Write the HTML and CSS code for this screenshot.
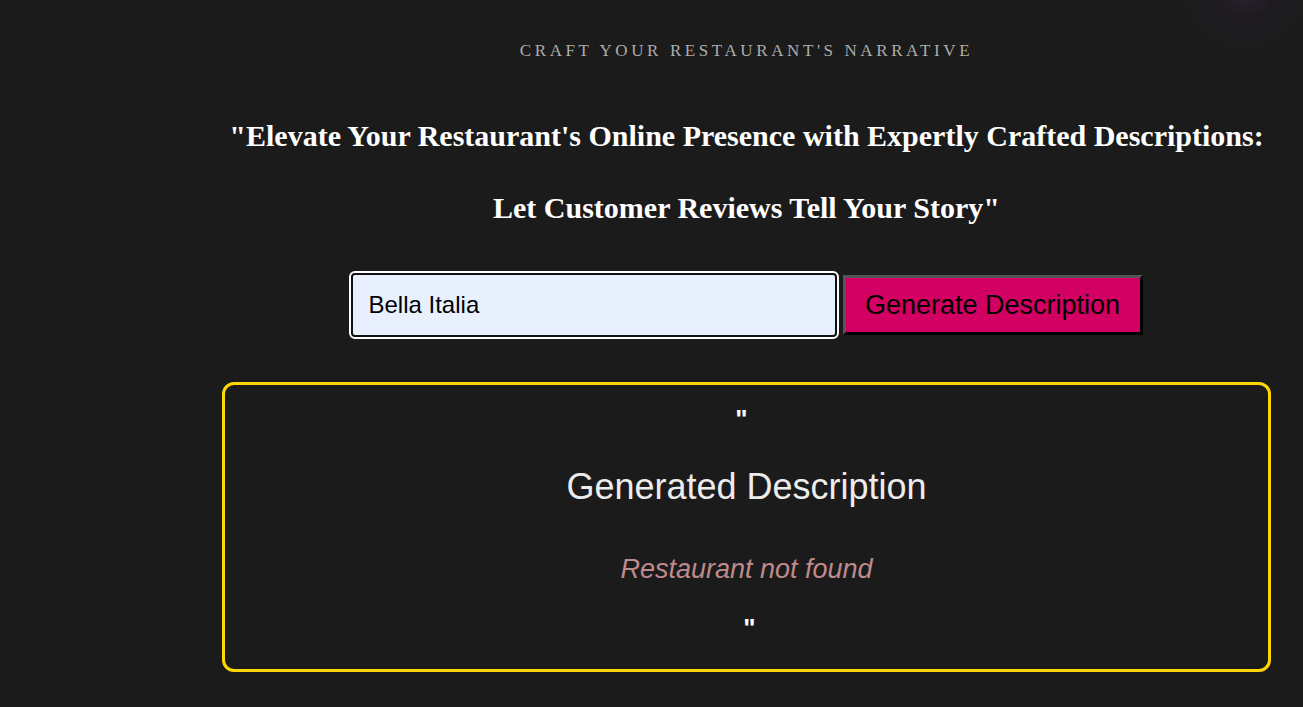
FILE: index.html
```html
<!DOCTYPE html>
<html lang="en">
<head>
<meta charset="utf-8">
<title>Craft Your Restaurant's Narrative</title>
<link rel="stylesheet" href="styles.css">
</head>
<body>
<div class="page">
  <main class="main">
    <p class="eyebrow">Craft Your Restaurant's Narrative</p>
    <h1 class="headline">
      <span class="line">"Elevate Your Restaurant's Online Presence with Expertly Crafted Descriptions:</span>
      <span class="line">Let Customer Reviews Tell Your Story"</span>
    </h1>
    <form class="search">
      <input class="search-input" type="text" value="Bella Italia">
      <button class="search-btn" type="button">Generate Description</button>
    </form>
    <section class="result">
      <div class="quote">"</div>
      <h2 class="result-title">Generated Description</h2>
      <p class="result-text">Restaurant not found</p>
      <div class="quote quote-end">"</div>
    </section>
  </main>
</div>
</body>
</html>
```

FILE: styles.css
```css
html, body {
  margin: 0;
  padding: 0;
}
body {
  background-color: #1b1b1b;
  background-image: radial-gradient(circle at 1245px -14px, rgba(110, 50, 150, 0.26) 0, rgba(60, 30, 80, 0.07) 32px, rgba(27, 27, 27, 0) 85px);
  background-repeat: no-repeat;
  min-height: 707px;
  font-family: "Liberation Serif", "Times New Roman", serif;
  color: #fff;
  overflow: hidden;
}
.page {
  display: flex;
  padding-left: 222px;
}
.main {
  width: 1049px;
  display: flex;
  flex-direction: column;
  align-items: center;
}
.eyebrow {
  margin: 41px 0 0;
  font-size: 17px;
  letter-spacing: 3.6px;
  text-transform: uppercase;
  color: #adadad;
  line-height: 20px;
}
.headline {
  margin: 57px 0 0;
  display: flex;
  flex-direction: column;
  align-items: center;
  gap: 37px;
  font-size: 30px;
  font-weight: bold;
  line-height: 35px;
  white-space: nowrap;
}
.search {
  margin-top: 48px;
  display: flex;
  align-items: center;
  gap: 6px;
}
.search-input {
  box-sizing: border-box;
  width: 486px;
  height: 64px;
  border: 2px solid #111;
  outline: 2px solid #fff;
  border-radius: 4px;
  background: #e8f0fe;
  padding: 0 16px;
  font-family: "Liberation Sans", Arial, sans-serif;
  font-size: 24px;
  color: #000;
}
.search-btn {
  box-sizing: border-box;
  width: 300px;
  height: 60px;
  background: #d10062;
  border: 3px solid;
  border-color: #555 #000 #000 #555;
  font-family: "Liberation Sans", Arial, sans-serif;
  font-size: 27px;
  color: #000;
  padding: 0;
}
.result {
  box-sizing: border-box;
  width: 1049px;
  height: 290px;
  margin-top: 45px;
  border: 3px solid #ffd700;
  border-radius: 12px;
  display: flex;
  flex-direction: column;
  align-items: center;
  font-family: "Liberation Sans", Arial, sans-serif;
}
.quote {
  margin-top: 19px;
  font-size: 26px;
  font-weight: bold;
  line-height: 30px;
  color: #fff;
  transform: translateX(-5px);
}
.quote-end {
  margin-top: 29px;
  transform: translateX(3px);
}
.result-title {
  margin: 32px 0 0;
  font-size: 36px;
  font-weight: normal;
  line-height: 42px;
  color: #ececec;
}
.result-text {
  margin: 46px 0 0;
  font-size: 27px;
  font-style: italic;
  line-height: 30px;
  color: #bf8a8c;
}
```
